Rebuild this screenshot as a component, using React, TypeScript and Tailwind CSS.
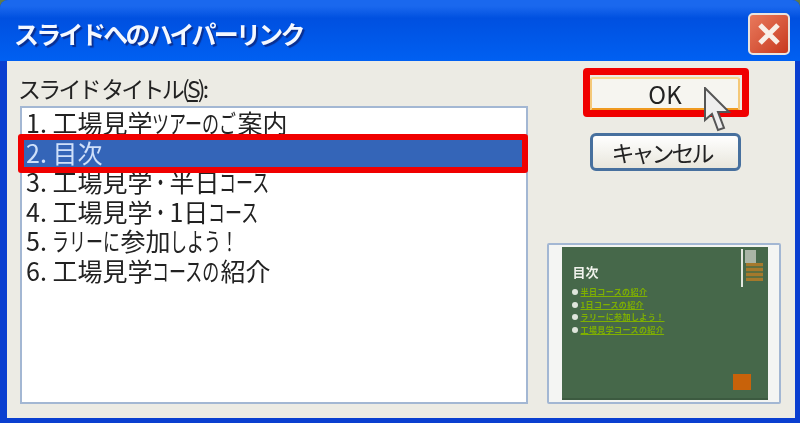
const jp = "font-['Noto_Sans_CJK_JP','Liberation_Sans',sans-serif]";

// the reference squeezes kana horizontally, kanji keep their full width
function Kana({ children }: { children: string }) {
  return (
    <span
      className="inline-block origin-left scale-x-[0.68] whitespace-nowrap text-[25px]"
      style={{ width: children.length * 17 }}
    >
      {children}
    </span>
  );
}

const slides = [
  <>1. 工場見学<Kana>ツアーのご</Kana>案内</>,
  <>2. 目次</>,
  <>3. 工場見学<Kana>・</Kana>半日<Kana>コース</Kana></>,
  <>4. 工場見学<Kana>・</Kana>1日<Kana>コース</Kana></>,
  <>5. <Kana>ラリーに</Kana>参加<Kana>しよう！</Kana></>,
  <>6. 工場見学<Kana>コースの</Kana>紹介</>,
];

function CloseButton() {
  return (
    <div className="flex h-[42px] w-[42px] items-center justify-center rounded-[5px] border-2 border-[#e8e4e0] bg-gradient-to-br from-[#e8795c] to-[#c8371c]">
      <svg width="26" height="26" viewBox="0 0 26 26">
        <path d="M4 4 L22 22 M22 4 L4 22" stroke="#f8efe8" strokeWidth="5" />
      </svg>
    </div>
  );
}

function Cursor() {
  return (
    <svg className="absolute left-[704px] top-[87px]" width="28" height="48" viewBox="0 0 28 48">
      <path
        d="M1 1 L1 33 L8 27 L14 43 L20 41 L14 25 L25 25 Z"
        fill="#eeeeee"
        stroke="#555555"
        strokeWidth="2"
      />
    </svg>
  );
}

function Preview() {
  const links = ["半日コースの紹介", "1日コースの紹介", "ラリーに参加しよう！", "工場見学コースの紹介"];
  return (
    <div className="flex h-[161px] w-[234px] justify-center rounded-[2px] border-2 border-[#a3b7d3] bg-[#f4f5f3] py-[2px] pl-[1px]">
      <div className="flex h-[153px] w-[206px] border-b-2 border-[#3c5a40] bg-[#46684a]">
        <div className="flex flex-1 flex-col pl-[10px] pt-[16px]">
          <div className="pl-[1px] text-[13px] font-bold leading-[18px] text-[#f0f2ec]">目次</div>
          <div className="mt-[7px] flex flex-col gap-[4px]">
            {links.map((s) => (
              <div key={s} className="flex h-[8.5px] items-center gap-[3px]">
                <div className="h-[6px] w-[6px] rounded-full bg-[#dfe5dc]" />
                <span className="whitespace-nowrap text-[8px] font-bold leading-[8px] tracking-[0.4px] text-[#7fb000] underline">
                  {s}
                </span>
              </div>
            ))}
          </div>
        </div>
        <div className="flex w-[30px] flex-col items-end pr-[4px] pt-[2px]">
          <div className="flex h-[38px] gap-[2px]">
            <div className="h-[38px] w-[2px] bg-[#e4e8e0]" />
            <div className="flex w-[19px] flex-col pt-[1px]">
              <div className="h-[13px] w-[11px] bg-[#a9b5a6]" />
              <div className="ml-[1px] h-[18px] w-[17px] bg-[repeating-linear-gradient(0deg,#a5792c_0px,#a5792c_3px,#5f6f3f_3px,#5f6f3f_5px)]" />
            </div>
          </div>
          <div className="mb-[8px] mr-[13px] mt-auto h-[16px] w-[18px] bg-[#c8620a]" />
        </div>
      </div>
    </div>
  );
}

export default function App() {
  return (
    <div className="h-[423px] w-[800px] overflow-hidden bg-[#5f7a4a]">
      <div className={`${jp} relative h-[423px] w-[800px] overflow-hidden rounded-t-[8px] bg-[#0a3fd0] text-[#222] blur-[0.7px]`}>
        <div className="flex h-[61px] items-center justify-between bg-gradient-to-b from-[#1a68ee] from-10% via-[#0050e0] via-30% to-[#0060f2] pl-[14px] pr-[10px] pt-[6px]">
          <span className="whitespace-nowrap text-[25px] font-bold leading-none tracking-[-2.7px] text-[#f4f8ff] [text-shadow:2px_2px_1px_#0a2f90]">
            スライドへのハイパーリンク
          </span>
          <CloseButton />
        </div>

        <div className="mb-[5px] ml-[7px] mr-[5px] flex h-[357px] bg-[#ecebe4] pl-[13px]">
          <div className="flex w-[508px] flex-col pt-[10px]">
            <div className="-ml-[2px] h-[35px] whitespace-nowrap text-[23px] leading-[35px] tracking-[-2.8px]">
              スライド タイトル(<span className="underline">S</span>):
            </div>
            <div className="h-[298px] border-2 border-[#a3b7d3] bg-white pl-[4px]">
              {slides.map((s, i) => (
                <div
                  key={i}
                  className={
                    i === 1
                      ? "-ml-[4px] h-[29.5px] bg-[#3465b8] pl-[4px] text-[25px] leading-[29.5px] text-[#cfe0fa]"
                      : "h-[29.5px] whitespace-nowrap text-[25px] leading-[29.5px]"
                  }
                >
                  {s}
                </div>
              ))}
            </div>
          </div>

          <div className="ml-[19px] flex w-[234px] flex-col">
            <div className="flex flex-col items-start pl-[43px] pt-[16px]">
              <button className="h-[35px] w-[150px] rounded-[3px] border-x-2 border-b-4 border-t-2 border-x-[#f4c878] border-b-[#f09a20] border-t-[#f8d890] bg-[#f6f5f0] text-[24px] leading-none">
                OK
              </button>
              <button className="mt-[21px] h-[38px] w-[151px] rounded-[6px] border-[3px] border-[#47709e] bg-gradient-to-b from-white to-[#e8e6dc] pr-[8px] text-[23px] leading-none tracking-[-3px]">
                キャンセル
              </button>
            </div>
            <div className="mb-[14px] mt-auto">
              <Preview />
            </div>
          </div>
        </div>

        {/* red callouts drawn over the dialog */}
        <div className="absolute left-[18px] top-[134px] h-[39px] w-[510px] rounded-[3px] border-[6px] border-[#f00000]" />
        <div className="absolute left-[583px] top-[68px] h-[49px] w-[166px] rounded-[4px] border-[7px] border-[#f00000]" />
        <Cursor />
      </div>
    </div>
  );
}
